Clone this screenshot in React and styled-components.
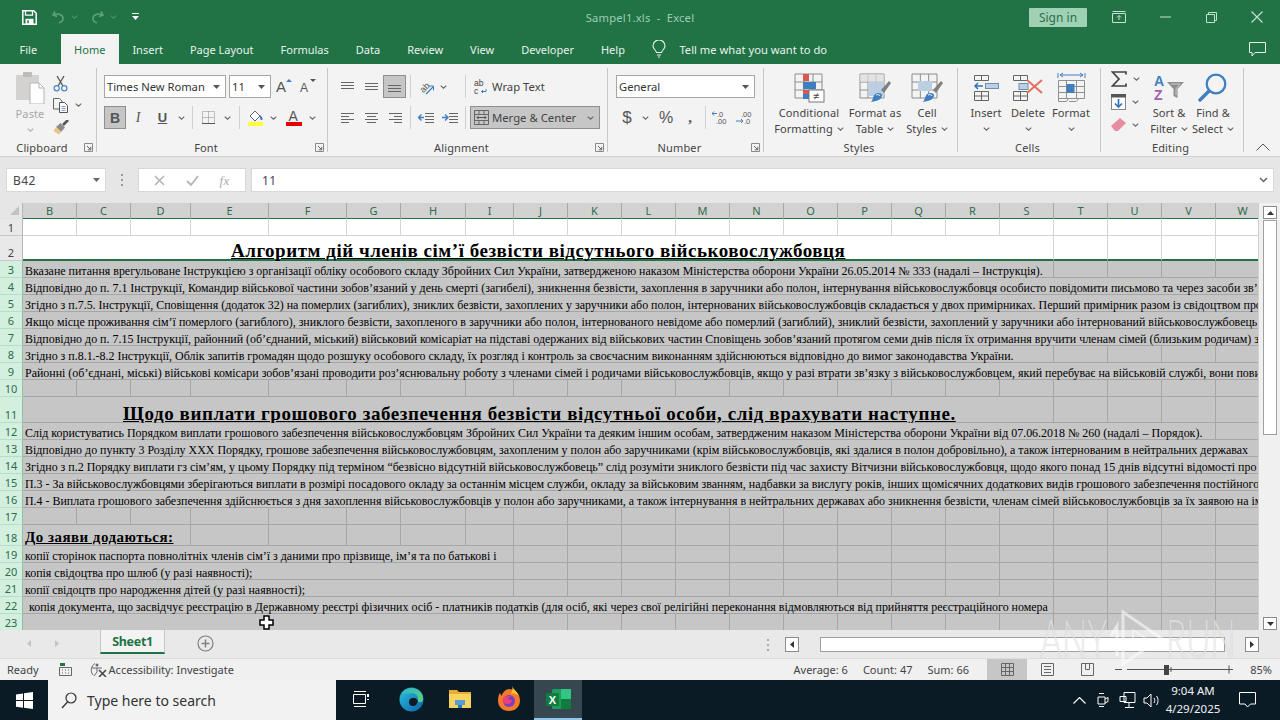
import styled, { createGlobalStyle } from "styled-components";

const UI = `"Noto Sans", "Open Sans", sans-serif`;

const GlobalStyle = createGlobalStyle`
  html, body { margin: 0; padding: 0; background: #fff; }
  body { font-family: ${UI}; font-size: 11px; color: #333; }
  * { box-sizing: border-box; }
`;

const Svg = ({ w, h, children }) => (
  <svg width={w} height={h} viewBox={`0 0 ${w} ${h}`} fill="none" style={{ display: "block", flex: "none" }}>
    {children}
  </svg>
);

const Chev = ({ c = "#666" }) => (
  <Svg w={7} h={4}>
    <path d="M.7.6 3.5 3.2 6.3.6" stroke={c} strokeWidth="1.1" />
  </Svg>
);

const Caret = ({ c = "#555" }) => (
  <Svg w={7} h={4}>
    <path d="M0 0h7L3.5 4z" fill={c} />
  </Svg>
);

const Launcher = () => (
  <Svg w={9} h={9}>
    <path d="M.5 8.5v-8h8v8z" stroke="#8a8a8a" />
    <path d="M3 3l3.5 3.5M6.8 3.8v3h-3" stroke="#666" />
  </Svg>
);

/* ---------- title bar ---------- */
const TitleBar = styled.header`
  height: 34px;
  background: #217346;
  display: grid;
  grid-template-columns: 1fr auto 1fr;
  align-items: center;
`;
const Qat = styled.div`
  display: flex;
  align-items: center;
  padding-left: 22px;
`;
const QatBtn = styled.div`
  display: flex;
  align-items: center;
  gap: 6px;
  margin-left: ${(p) => p.$ml}px;
`;
const DocTitle = styled.div`
  color: #9fcdb3;
  font-size: 11.2px;
  letter-spacing: 0.2px;
  white-space: pre;
`;
const WindowControls = styled.div`
  display: flex;
  align-items: center;
  justify-content: flex-end;
`;
const SignIn = styled.div`
  width: 58px;
  height: 19px;
  margin-right: 9px;
  background: #9fd2b4;
  color: #2e6f4e;
  font-size: 12px;
  border-radius: 1px;
  display: flex;
  align-items: center;
  justify-content: center;
`;
const WinBtn = styled.div`
  width: 46px;
  display: flex;
  justify-content: center;
`;

/* ---------- tabs ---------- */
const TabBar = styled.nav`
  height: 30px;
  background: #217346;
  display: flex;
  align-items: stretch;
  padding-left: 6px;
`;
const Tab = styled.div`
  padding: 0 13.5px;
  margin-right: ${(p) => p.$mr || 0}px;
  display: flex;
  align-items: center;
  color: ${(p) => (p.$active ? "#217346" : "#e8f2ec")};
  background: ${(p) => (p.$active ? "#f3f3f3" : "transparent")};
  font-size: 11px;
  white-space: nowrap;
`;
const TellMe = styled.div`
  display: flex;
  align-items: center;
  gap: 13px;
  margin-left: 14px;
  color: #e8f2ec;
  font-size: 11.2px;
`;
const CommentBtn = styled.div`
  margin-left: auto;
  margin-right: 14px;
  display: flex;
  align-items: center;
`;

/* ---------- ribbon ---------- */
const Ribbon = styled.section`
  height: 93px;
  background: #f3f3f3;
  border-bottom: 1px solid #d2d2d2;
  display: flex;
`;
const Group = styled.div`
  width: ${(p) => p.$w}px;
  height: 92px;
  display: flex;
  flex-direction: column;
  background: linear-gradient(#c8c8c8, #c8c8c8) right 4px / 1px 84px no-repeat;
`;
const GroupBody = styled.div`
  height: 75px;
  padding: ${(p) => p.$top ?? 11}px 0 0 ${(p) => p.$left ?? 7}px;
  display: ${(p) => (p.$row ? "flex" : "block")};
`;
const GroupFoot = styled.div`
  height: 17px;
  display: flex;
  align-items: center;
  padding-right: 4px;
`;
const GroupLabel = styled.div`
  flex: 1;
  text-align: center;
  font-size: 11px;
  letter-spacing: 0.15px;
  color: #444;
`;
const ToolRow = styled.div`
  display: flex;
  align-items: center;
  height: 23px;
  margin-bottom: 8px;
`;
const Tool = styled.div`
  width: ${(p) => p.$w}px;
  height: 23px;
  margin-left: ${(p) => p.$ml || 0}px;
  display: flex;
  align-items: center;
  justify-content: center;
  flex: none;
  background: ${(p) => (p.$on ? "#c6c6c6" : "transparent")};
  border: 1px solid ${(p) => (p.$on ? "#8f8f8f" : "transparent")};
`;
const VSep = styled.div`
  width: 1px;
  height: 23px;
  flex: none;
  background: #d0d0d0;
  margin: 0 ${(p) => p.$r ?? 3}px 0 ${(p) => p.$l ?? 3}px;
`;
const Select = styled.div`
  width: ${(p) => p.$w}px;
  height: 23px;
  margin-left: ${(p) => p.$ml || 0}px;
  background: #fff;
  border: 1px solid #a6a6a6;
  padding: 0 5px 0 2px;
  display: flex;
  align-items: center;
  justify-content: space-between;
  flex: none;
  font-size: 11.2px;
  color: #333;
  white-space: nowrap;
`;
const WideBtn = styled.div`
  width: ${(p) => p.$w}px;
  height: 23px;
  flex: none;
  display: flex;
  align-items: center;
  gap: 3px;
  padding-left: 3px;
  font-size: 11.3px;
  color: #444;
  white-space: nowrap;
  background: ${(p) => (p.$on ? "#c6c6c6" : "transparent")};
  border: 1px solid ${(p) => (p.$on ? "#8f8f8f" : "transparent")};
  & > i { margin-left: auto; margin-right: 5px; display: block; }
`;
const Big = styled.div`
  width: ${(p) => p.$w}px;
  flex: none;
  display: flex;
  flex-direction: column;
  align-items: center;
  font-size: 11px;
  line-height: 16px;
  color: #444;
  letter-spacing: 0.1px;
`;
const BigIcon = styled.div`
  height: 35px;
  display: flex;
  align-items: center;
  justify-content: center;
`;
const BigLine = styled.div`
  display: flex;
  align-items: center;
  gap: 4px;
  height: 16px;
  margin-top: ${(p) => p.$mt || 0}px;
  white-space: nowrap;
  color: ${(p) => (p.$dim ? "#a8a8a8" : "inherit")};
`;
const ClipColumn = styled.div`
  display: flex;
  flex-direction: column;
  width: 46px;
  margin-left: 8px;
`;
const ClipItem = styled.div`
  height: 23.5px;
  display: flex;
  align-items: center;
  gap: 6px;
`;
const MiniStack = styled.div`
  width: 36px;
  flex: none;
  margin-top: -3px;
`;
const MiniItem = styled.div`
  height: 23px;
  display: flex;
  align-items: center;
  gap: 6px;
`;
const CollapseCell = styled.div`
  flex: 1;
  display: flex;
  align-items: flex-end;
  justify-content: center;
  padding: 0 0 5px 1px;
`;
const Glyph = styled.span`
  font-family: ${(p) => p.$font || `"Liberation Sans", sans-serif`};
  font-size: ${(p) => p.$size || 14}px;
  font-weight: ${(p) => (p.$bold ? 700 : 400)};
  font-style: ${(p) => (p.$italic ? "italic" : "normal")};
  text-decoration: ${(p) => (p.$under ? "underline" : "none")};
  color: ${(p) => p.$color || "#555"};
  line-height: 1;
`;

/* ---------- formula bar ---------- */
const FormulaBar = styled.section`
  height: 46px;
  background: #e6e6e6;
  padding: 11px 6px 11px 6px;
  display: flex;
  align-items: stretch;
  color: #444;
`;
const FieldBox = styled.div`
  width: ${(p) => p.$w || "auto"};
  flex: ${(p) => (p.$grow ? 1 : "none")};
  background: #fff;
  border: 1px solid #d8d8d8;
  margin-left: ${(p) => p.$ml || 0}px;
  display: flex;
  align-items: center;
  justify-content: ${(p) => p.$justify || "space-between"};
  padding: 0 5px 0 ${(p) => p.$pl || 6}px;
  font-size: 12px;
  letter-spacing: 0.4px;
`;
const Grip = styled.div`
  width: 32px;
  flex: none;
  display: flex;
  align-items: center;
  justify-content: center;
`;

/* ---------- sheet ---------- */
const SheetArea = styled.section`
  height: 427px;
  display: flex;
  position: relative;
  background: #fff;
`;
const GridArea = styled.div`
  width: 1258px;
  overflow: hidden;
  font-family: "Liberation Serif", "Times New Roman", serif;
  color: #000;
`;
const COLS = "23px 54px 54px 60px 78px 78px 54px 65px 48px repeat(14, 54px)";
const HeadRow = styled.div`
  display: grid;
  grid-template-columns: ${COLS};
  height: 16px;
`;
const Corner = styled.div`
  background: #e6e6e6;
  display: flex;
  justify-content: flex-end;
  align-items: flex-end;
  padding: 0 3px 3px 0;
  border-right: 1px solid #b5b5b5;
  border-bottom: 2px solid #e0e0e0;
`;
const ColHead = styled.div`
  background: #d2d2d2;
  border-right: 1px solid #a8a8a8;
  border-bottom: 2px solid #217346;
  display: flex;
  align-items: center;
  justify-content: center;
  font-family: ${UI};
  font-size: 11px;
  color: #2f6a4c;
`;
const Row = styled.div`
  display: grid;
  grid-template-columns: ${COLS};
  height: ${(p) => p.$h}px;
`;
const RowHead = styled.div`
  background: ${(p) => (p.$sel ? "#d3f0df" : "#e9e9e9")};
  color: ${(p) => (p.$sel ? "#2f6a4c" : "#444")};
  border-right: 1px solid ${(p) => (p.$sel ? "#8fbfa4" : "#b5b5b5")};
  border-bottom: 1px solid ${(p) => (p.$sel ? "#b7dcc7" : "#c8c8c8")};
  font-family: ${UI};
  font-size: 11px;
  line-height: 14px;
  display: flex;
  align-items: flex-end;
  justify-content: center;
`;
const Cell = styled.div`
  grid-column: span ${(p) => p.$span || 1};
  background: ${(p) => (p.$sel ? "#c6c6c6" : "#fff")};
  border-right: 1px solid ${(p) => (p.$sel ? "#a6a6a6" : "#d4d4d4")};
  border-bottom: ${(p) => (p.$edge ? "2px solid #217346" : `1px solid ${p.$sel ? "#a6a6a6" : "#d4d4d4"}`)};
  white-space: pre;
  overflow: visible;
  display: flex;
  align-items: flex-end;
  padding-left: ${(p) => p.$indent ?? 2}px;
  font-size: 11.95px;
  line-height: 12px;
  min-width: 0;
`;
const Heading = styled.span`
  display: block;
  font-weight: 700;
  font-size: ${(p) => p.$size}px;
  line-height: 16px;
  text-decoration: underline;
  letter-spacing: ${(p) => p.$ls}px;
`;
const VScroll = styled.div`
  width: 22px;
  background: #f0f0f0;
  border-left: 1px solid #d0d0d0;
  padding: 3px 3px 0 4px;
  display: flex;
  flex-direction: column;
  height: 427px;
`;
const ScrollBtn = styled.div`
  height: 13px;
  background: #fff;
  border: 1px solid #8c8c8c;
  flex: none;
  display: flex;
  align-items: center;
  justify-content: center;
  margin-top: ${(p) => (p.$end ? "auto" : 0)};
`;
const VThumb = styled.div`
  height: 215px;
  margin-top: 1px;
  background: #fff;
  border: 1px solid #a0a0a0;
  flex: none;
`;
const CellPointer = styled.div`
  position: absolute;
  left: 259px;
  top: 412px;
  pointer-events: none;
`;

/* ---------- sheet tabs ---------- */
const SheetTabs = styled.section`
  height: 28px;
  background: #e9e9e9;
  display: flex;
  align-items: flex-start;
`;
const NavArrows = styled.div`
  width: 100px;
  height: 26px;
  display: flex;
  align-items: center;
  gap: 24px;
  padding-left: 27px;
`;
const SheetTab = styled.div`
  width: 65px;
  height: 24px;
  background: #f3f3f3;
  border-left: 1px solid #c8c8c8;
  border-right: 1px solid #c8c8c8;
  border-bottom: 2px solid #217346;
  color: #217346;
  font-weight: 700;
  font-size: 12.5px;
  letter-spacing: -0.3px;
  display: flex;
  align-items: center;
  justify-content: center;
`;
const AddSheet = styled.div`
  margin-left: 32px;
  margin-top: 5px;
`;
const HScrollWrap = styled.div`
  margin-left: auto;
  margin-right: 21px;
  display: flex;
  align-items: center;
  height: 15px;
  margin-top: 7px;
`;
const HBtn = styled.div`
  width: 14px;
  height: 15px;
  background: #fff;
  border: 1px solid #8c8c8c;
  flex: none;
  display: flex;
  align-items: center;
  justify-content: center;
`;
const HThumb = styled.div`
  width: 405px;
  height: 15px;
  margin: 0 20px 0 21px;
  background: #fff;
  border: 1px solid #a0a0a0;
  flex: none;
`;
const GripH = styled.div`
  display: flex;
  height: 15px;
  align-items: center;
  margin-right: 16px;
`;

/* ---------- status bar ---------- */
const StatusBar = styled.footer`
  height: 22px;
  background: #f0f0f0;
  border-top: 1px solid #dcdcdc;
  display: flex;
  align-items: center;
  font-size: 11px;
  color: #444;
  padding-left: 7px;
`;
const StatusLeft = styled.div`
  display: flex;
  align-items: center;
`;
const StatusIcon = styled.span`
  margin-left: ${(p) => p.$ml}px;
`;
const StatusStats = styled.div`
  margin-left: auto;
  display: flex;
  gap: 15px;
  margin-right: 18px;
`;
const ViewBtn = styled.div`
  width: 40px;
  height: 22px;
  display: flex;
  align-items: center;
  justify-content: center;
  background: ${(p) => (p.$on ? "#c6c6c6" : "transparent")};
`;
const ZoomSlider = styled.div`
  display: flex;
  align-items: center;
  margin-left: 8px;
`;
const ZoomValue = styled.div`
  width: 30px;
  margin-left: 9px;
  margin-right: 8px;
  text-align: right;
  white-space: nowrap;
`;

/* ---------- taskbar ---------- */
const Taskbar = styled.footer`
  height: 40px;
  background: #0b1b25;
  display: flex;
  align-items: stretch;
  color: #fff;
`;
const StartBtn = styled.div`
  width: 48px;
  display: flex;
  align-items: center;
  justify-content: center;
`;
const SearchBox = styled.div`
  width: 288px;
  background: #f2f2f2;
  color: #333;
  display: flex;
  align-items: center;
  gap: 10px;
  padding-left: 13px;
  font-size: 14px;
`;
const TaskIcon = styled.div`
  width: 48px;
  margin-left: ${(p) => p.$ml || 0}px;
  display: flex;
  align-items: center;
  justify-content: center;
  background: ${(p) => (p.$on ? "#37474f" : "transparent")};
  border-bottom: 2px solid ${(p) => (p.$on ? "#8fc6ea" : "transparent")};
`;
const Tray = styled.div`
  margin-left: auto;
  padding-right: 9px;
  display: flex;
  align-items: center;
`;
const TrayIcon = styled.div`
  width: 24px;
  display: flex;
  justify-content: center;
`;
const Clock = styled.div`
  width: 60px;
  text-align: center;
  font-size: 11.5px;
  line-height: 18px;
  white-space: nowrap;
  color: #eef2f4;
`;
const NotifyBtn = styled.div`
  width: 48px;
  display: flex;
  justify-content: center;
`;

/* ---------- watermark ---------- */
const Root = styled.div`
  width: 1280px;
  height: 720px;
  overflow: hidden;
  position: relative;
  display: flex;
  flex-direction: column;
`;
const Watermark = styled.div`
  position: absolute;
  left: 1040px;
  top: 610px;
  width: 196px;
  height: 56px;
  display: flex;
  align-items: center;
  color: rgba(255, 255, 255, 0.55);
  font-family: "Lato", sans-serif;
  font-weight: 300;
  font-size: 54px;
  line-height: 56px;
  text-shadow: 0 0 1px rgba(130, 130, 130, 0.35);
  pointer-events: none;
`;
const MarkWord = styled.span`
  display: block;
  flex: none;
  transform: scaleX(0.62);
  transform-origin: left center;
  width: ${(p) => p.$w}px;
  white-space: nowrap;
`;

/* ---------- data ---------- */
const COLUMN_NAMES = "BCDEFGHIJKLMNOPQRSTUVW".split("");

const ROWS = [
  { n: 1, h: 17 },
  { n: 2, h: 25, span: 18, edge: true, head: "Алгоритм дій членів сім’ї безвісти відсутнього військовослужбовця", indent: 208, size: 19, ls: 0.52 },
  { n: 3, h: 17, span: 18, text: "Вказане питання врегульоване Інструкцією з організації обліку особового складу Збройних Сил України, затвердженою наказом Міністерства оборони України 26.05.2014 № 333 (надалі – Інструкція)." },
  { n: 4, h: 17, span: 22, text: "Відповідно до п. 7.1 Інструкції, Командир військової частини зобов’язаний у день смерті (загибелі), зникнення безвісти, захоплення в заручники або полон, інтернування військовослужбовця особисто повідомити письмово та через засоби зв’язку" },
  { n: 5, h: 17, span: 22, text: "Згідно з п.7.5. Інструкції, Сповіщення (додаток 32) на померлих (загиблих), зниклих безвісти, захоплених у заручники або полон, інтернованих військовослужбовців складається у двох примірниках. Перший примірник разом із свідоцтвом про смерть" },
  { n: 6, h: 17, span: 22, text: "Якщо місце проживання сім’ї померлого (загиблого), зниклого безвісти, захопленого в заручники або полон, інтернованого невідоме або померлий (загиблий), зниклий безвісти, захоплений у заручники або інтернований військовослужбовець не" },
  { n: 7, h: 17, span: 22, text: "Відповідно до п. 7.15 Інструкції, районний (об’єднаний, міський) військовий комісаріат на підставі одержаних від військових частин Сповіщень зобов’язаний протягом семи днів після їх отримання вручити членам сімей (близьким родичам) загиблих" },
  { n: 8, h: 17, span: 18, text: "Згідно з п.8.1.-8.2 Інструкції, Облік запитів громадян щодо розшуку особового складу, їх розгляд і контроль за своєчасним виконанням здійснюються відповідно до вимог законодавства України." },
  { n: 9, h: 17, span: 22, text: "Районні (об’єднані, міські) військові комісари зобов’язані проводити роз’яснювальну роботу з членами сімей і родичами військовослужбовців, якщо у разі втрати зв’язку з військовослужбовцем, який перебуває на військовій службі, вони повинні" },
  { n: 10, h: 17 },
  { n: 11, h: 26, span: 18, head: "Щодо виплати грошового забезпечення безвісти відсутньої особи, слід врахувати наступне.", indent: 100, size: 19, ls: 0.58 },
  { n: 12, h: 17, span: 21, text: "Слід користуватись Порядком виплати грошового забезпечення військовослужбовцям Збройних Сил України та деяким іншим особам, затвердженим наказом Міністерства оборони України від 07.06.2018 № 260 (надалі – Порядок)." },
  { n: 13, h: 17, span: 22, text: "Відповідно до пункту 3 Розділу XXX Порядку, грошове забезпечення військовослужбовцям, захопленим у полон або заручниками (крім військовослужбовців, які здалися в полон добровільно), а також інтернованим в нейтральних державах" },
  { n: 14, h: 17, span: 22, text: "Згідно з п.2 Порядку виплати гз сім’ям, у цьому Порядку під терміном “безвісно відсутній військовослужбовець” слід розуміти зниклого безвісти під час захисту Вітчизни військовослужбовця, щодо якого понад 15 днів відсутні відомості про" },
  { n: 15, h: 17, span: 22, text: "П.3 - За військовослужбовцями зберігаються виплати в розмірі посадового окладу за останнім місцем служби, окладу за військовим званням, надбавки за вислугу років, інших щомісячних додаткових видів грошового забезпечення постійного" },
  { n: 16, h: 17, span: 22, text: "П.4 - Виплата грошового забезпечення здійснюється з дня захоплення військовослужбовців у полон або заручниками, а також інтернування в нейтральних державах або зникнення безвісти, членам сімей військовослужбовців за їх заявою на ім’я" },
  { n: 17, h: 17 },
  { n: 18, h: 21, span: 3, head: "До заяви додаються:", indent: 2, size: 15, ls: 0.46 },
  { n: 19, h: 17, span: 8, text: "копії сторінок паспорта повнолітніх членів сім’ї з даними про прізвище, ім’я та по батькові і" },
  { n: 20, h: 17, span: 8, text: "копія свідоцтва про шлюб (у разі наявності);" },
  { n: 21, h: 17, span: 8, text: "копії свідоцтв про народження дітей (у разі наявності);" },
  { n: 22, h: 17, span: 18, indent: 6, text: "копія документа, що засвідчує реєстрацію в Державному реєстрі фізичних осіб - платників податків (для осіб, які через свої релігійні переконання відмовляються від прийняття реєстраційного номера" },
  { n: 23, h: 17, span: 8 },
];

const SheetRow = ({ row }) => {
  const { n, h, span = 1, text, head, indent, size, ls, edge } = row;
  const sel = n >= 3;
  const blanks = COLUMN_NAMES.length - span;
  return (
    <Row $h={h}>
      <RowHead $sel={sel}>{n}</RowHead>
      <Cell $span={span} $sel={sel} $edge={edge} $indent={indent}>
        {head ? <Heading $size={size} $ls={ls}>{head}</Heading> : text}
      </Cell>
      {Array.from({ length: blanks }, (_, i) => (
        <Cell key={i} $sel={sel} $edge={edge} />
      ))}
    </Row>
  );
};

/* ---------- ribbon icons ---------- */
const SaveIcon = () => (
  <Svg w={15} h={15}>
    <path d="M.8.8h11l2.4 2.4v11H.8z" stroke="#fff" strokeWidth="1.5" />
    <path d="M3.5 1v4.2h7V1" stroke="#fff" strokeWidth="1.3" />
    <path d="M3.5 14V8.8h8V14" fill="#fff" />
    <path d="M6 10.3v3" stroke="#217346" strokeWidth="1.5" />
  </Svg>
);
const UndoIcon = ({ flip }) => (
  <svg width="13" height="14" viewBox="0 0 13 14" fill="none" style={{ transform: flip ? "scaleX(-1)" : "none", display: "block" }}>
    <path d="M3 1.5 1 5l4 1.5M1.5 5C6 2.8 11 4.5 11 8.5c0 2.2-1.8 3.8-4 4.2" stroke="#5f9f7d" strokeWidth="1.6" />
  </svg>
);
const QatMore = () => (
  <Svg w={7} h={8}>
    <path d="M0 .5h7" stroke="#fff" />
    <path d="M0 3h7L3.5 7z" fill="#fff" />
  </Svg>
);
const PasteIcon = () => (
  <Svg w={30} h={32}>
    <rect x="1" y="3" width="23" height="25" fill="#d4d2d0" />
    <rect x="8" y="0" width="9" height="5" rx="1" fill="#bdbbb9" />
    <path d="M15 11h9l5 5v16H15z" fill="#fff" stroke="#b5b5b5" />
    <path d="M24 11v5h5" stroke="#b5b5b5" />
  </Svg>
);
const CutIcon = () => (
  <Svg w={15} h={17}>
    <path d="M4 1l6 10M11 1 5 11" stroke="#555" strokeWidth="1.3" />
    <circle cx="3.7" cy="13.2" r="2.6" stroke="#4a86c5" strokeWidth="1.2" />
    <circle cx="11.3" cy="13.2" r="2.6" stroke="#4a86c5" strokeWidth="1.2" />
  </Svg>
);
const CopyIcon = () => (
  <Svg w={16} h={15}>
    <path d="M.5.5h6l2.5 2.5v8H.5z" fill="#f3f3f3" stroke="#666" />
    <path d="M6.5 4.5h5l3 3v7h-8z" fill="#fff" stroke="#555" />
    <path d="M8.5 8.5h4M8.5 10.5h4M8.5 12.5h4" stroke="#7a9cc0" />
  </Svg>
);
const BrushIcon = () => (
  <Svg w={16} h={15}>
    <path d="M10 5 15 0" stroke="#555" strokeWidth="2.6" />
    <path d="M7.5 3 12 7.5 8 12 3 7z" fill="#8b8b8b" />
    <path d="M3 7l5 5-2 2.5-5.5-3.5z" fill="#e9c77a" />
  </Svg>
);
const GrowFont = ({ up }) => (
  <Svg w={18} h={19}>
    <text x="0" y="15" fontFamily="Liberation Sans" fontSize={up ? 15 : 12} fill="#555">A</text>
    <path d={up ? "M10 5h6L13 2z" : "M10 2h6L13 5z"} fill={up ? "#3f7fbf" : "#555"} />
  </Svg>
);
const BordersIcon = () => (
  <Svg w={13} h={13}>
    <path d="M.5.5h12v12H.5zM6.5.5v12M.5 6.5h12" stroke="#888" strokeDasharray="1 1" />
    <path d="M0 12.5h13" stroke="#555" />
  </Svg>
);
const FillIcon = () => (
  <Svg w={17} h={17}>
    <path d="M3 7 8 2l5 5-5 5z" fill="#fff" stroke="#666" />
    <path d="M13 6c2 2 3 3 2.5 4.5S13 11 13 9z" fill="#3f7fbf" />
    <rect x="1" y="13" width="15" height="4" fill="#ffff33" />
  </Svg>
);
const ColorAIcon = () => (
  <Svg w={16} h={17}>
    <text x="2.4" y="12" fontFamily="Liberation Sans" fontSize="14" fill="#555">A</text>
    <rect x="0" y="13" width="16" height="4" fill="#e00000" />
  </Svg>
);
const Lines = ({ rows }) => (
  <Svg w={15} h={13}>
    {rows.map(([a, b, y]) => (
      <path key={y} d={`M${a} ${y}.5H${b}`} stroke="#666" />
    ))}
  </Svg>
);
const L = (a1, b1, a2, b2) => [[a1, b1, 2], [a2, b2, 5], [a1, b1, 8], [a2, b2, 11]];
const VAlign = ({ y }) => (
  <Svg w={15} h={13}>
    <path d={`M1 ${y}.5h13M1 ${y + 3}.5h13M1 ${y + 6}.5h13`} stroke="#666" />
  </Svg>
);
const OrientIcon = () => (
  <Svg w={17} h={16}>
    <text x="1" y="12" fontFamily="Liberation Sans" fontSize="9" fill="#555" transform="rotate(-45 6 8)">ab</text>
    <path d="M8 15 15 8" stroke="#3f7fbf" strokeWidth="1.2" />
    <path d="M11 7h4.5v4.5" stroke="#3f7fbf" />
  </Svg>
);
const IndentIcon = ({ out }) => (
  <Svg w={16} h={13}>
    <path d="M7 2.5h9M7 5.5h9M7 8.5h9M7 11.5h9" stroke="#666" />
    <path d={out ? "M6 6.5H1M3.5 3.5l-3 3 3 3" : "M0 6.5h5M3 3.5l3 3-3 3"} stroke="#3f7fbf" strokeWidth="1.4" />
  </Svg>
);
const WrapIcon = () => (
  <Svg w={15} h={18}>
    <text x="0" y="8" fontFamily="Liberation Sans" fontSize="8.5" fill="#444">ab</text>
    <text x="0" y="16" fontFamily="Liberation Sans" fontSize="8.5" fill="#444">c</text>
    <path d="M12 11v2.500H7.500M9 12l-1.500 1.500L9 15" stroke="#3f7fbf" />
  </Svg>
);
const MergeIcon = () => (
  <Svg w={15} h={15}>
    <path d="M.5.5h14v14H.5zM.5 4.5h14M.5 10.5h14M5 .5v4M10 .5v4M5 10.5v4M10 10.5v4" stroke="#666" />
    <path d="M3 7.5h9M4.5 6 3 7.5 4.5 9M10.5 6 12 7.5 10.5 9" stroke="#555" />
  </Svg>
);
const DecIcon = ({ more }) => (
  <Svg w={18} h={17}>
    <text x={more ? 5 : 5} y="7.500" fontFamily="Liberation Sans" fontSize="7.5" fill="#555">{more ? ".00" : ".0"}</text>
    <text x={more ? 8 : 4} y="14.500" fontFamily="Liberation Sans" fontSize="7.5" fill="#555">{more ? ".0" : ".00"}</text>
    <path d={more ? "M0 12h7M5 10l2 2-2 2" : "M0 4.500h5M2 2.500l-2 2 2 2"} stroke="#3f7fbf" />
  </Svg>
);
const GridBase = ({ x = 1, y = 1, w = 27, h = 24, c = "#8c8c8c" }) => {
  const lines = [];
  for (let i = 0; i <= 3; i++) lines.push(`M${x + (w * i) / 3} ${y}v${h}`);
  for (let i = 0; i <= 3; i++) lines.push(`M${x} ${y + (h * i) / 3}h${w}`);
  return <path d={lines.join("")} stroke={c} />;
};
const CondIcon = () => (
  <Svg w={31} h={30}>
    <GridBase />
    <rect x="9" y="1" width="6" height="7" fill="#d9584f" />
    <rect x="9" y="9" width="13" height="7" fill="#3f7fbf" />
    <rect x="9" y="17" width="10" height="4" fill="#d9584f" />
    <rect x="9" y="21" width="6" height="5" fill="#3f7fbf" />
    <rect x="15" y="17" width="15" height="12" fill="#fff" stroke="#777" />
    <text x="19" y="27" fontFamily="Liberation Sans" fontSize="11" fill="#444">≠</text>
  </Svg>
);
const BrushOver = () => (
  <>
    <path d="M22 17 30 8l2 2-7 10z" fill="#7f7f7f" />
    <path d="M16 21c3-2 7-1 7 1 0 4-4 6-11 7 2-2 2-6 4-8z" fill="#3f7fbf" />
    <path d="M17 22c2-1 4 0 4 1" stroke="#fff" />
  </>
);
const TableStyleIcon = () => (
  <Svg w={33} h={30}>
    <GridBase w={24} />
    <rect x="9" y="9" width="16" height="14" fill="#bccfe2" />
    <rect x="1" y="1" width="24" height="8" fill="#dcdcdc" opacity=".7" />
    <BrushOver />
  </Svg>
);
const CellStyleIcon = () => (
  <Svg w={33} h={30}>
    <GridBase w={25} />
    <rect x="7" y="8" width="14" height="10" fill="#bccfe2" />
    <BrushOver />
  </Svg>
);
const InsertCellsIcon = () => (
  <Svg w={27} h={28}>
    <path d="M1.5 1.5h14v5h-14zM8.5 1.5v5M1.5 17.5h14v9h-14zM8.5 17.5v9M1.5 22h14" stroke="#666" />
    <rect x="12.5" y="9.5" width="13" height="5" fill="#bcd0e4" stroke="#6f8fae" />
    <path d="M10 12H2M5 9 2 12l3 3" stroke="#2f75b5" strokeWidth="1.5" />
  </Svg>
);
const DeleteCellsIcon = () => (
  <Svg w={32} h={28}>
    <path d="M1.5 1.5h14v5h-14zM8.5 1.5v5M1.5 17.5h14v9h-14zM8.5 17.5v9M1.5 22h14" stroke="#666" />
    <rect x="7" y="9.5" width="9" height="6" fill="#bcd0e4" stroke="#6f8fae" />
    <path d="M15 6l15 13M30 6 15 19" stroke="#e2705f" strokeWidth="2" />
  </Svg>
);
const FormatCellsIcon = () => (
  <Svg w={29} h={31}>
    <path d="M1 1v5M28 1v5M3 3h23M6 1 3 3l3 2M23 1l3 2-3 2" stroke="#3f7fbf" />
    <path d="M1.5 8.5h26v18h-26zM9.5 8.5v18M19.5 8.5v18M1.5 14.5h26M1.5 20.5h26" stroke="#909090" />
    <path d="M1.5 26.5v3h8l2-3M12 29.5h7l3-3" stroke="#909090" />
    <rect x="9.5" y="12" width="8" height="9" fill="#3f7fbf" />
  </Svg>
);
const SumIcon = () => (
  <Svg w={16} h={16}>
    <path d="M15 3.5V1H1.5L8 8 1.5 15H15v-2.5" stroke="#444" strokeWidth="1.7" />
  </Svg>
);
const FillDownIcon = () => (
  <Svg w={15} h={16}>
    <rect x=".5" y=".5" width="14" height="15" fill="#fff" stroke="#888" />
    <rect x="0" y="0" width="15" height="3.5" fill="#555" />
    <path d="M7.5 5v8M4 9.5l3.5 3.5L11 9.5" stroke="#2f75b5" strokeWidth="1.7" />
  </Svg>
);
const EraserIcon = () => (
  <Svg w={15} h={13}>
    <path d="M0 8 9 0l6 5-8 8H4z" fill="#e88ca0" />
  </Svg>
);
const SortIcon = () => (
  <Svg w={31} h={30}>
    <text x="0" y="13" fontFamily="Liberation Sans" fontWeight="700" fontSize="14" fill="#3f7fbf">A</text>
    <text x="0" y="27" fontFamily="Liberation Sans" fontWeight="700" fontSize="14" fill="#a65db0">Z</text>
    <path d="M13 9h17l-6.5 7v9l-4-2v-7z" fill="#8f8f8f" />
    <path d="M17 11h9l-4 5v6" stroke="#c9c9c9" />
  </Svg>
);
const FindIcon = () => (
  <Svg w={30} h={30}>
    <circle cx="18" cy="11" r="9.3" stroke="#3f7fbf" strokeWidth="2.3" />
    <path d="M11 18 2 27" stroke="#3f7fbf" strokeWidth="3.4" strokeLinecap="round" />
  </Svg>
);

/* ---------- taskbar and misc icons ---------- */
const WinLogo = () => (
  <Svg w={17} h={17}>
    <path d="M0 2.4 7 1.4v6.7H0zM8 1.3 17 0v8.1H8zM0 9h7v6.7L0 14.7zM8 9h9v8l-9-1.3z" fill="#fff" />
  </Svg>
);
const EdgeIcon = () => (
  <svg width="25" height="25" viewBox="0 0 25 25" style={{ display: "block" }}>
    <defs>
      <linearGradient id="edgeA" x1="0" y1="0" x2="1" y2="1">
        <stop offset="0" stopColor="#2bc3d8" />
        <stop offset="1" stopColor="#0b5fae" />
      </linearGradient>
      <linearGradient id="edgeB" x1="0" y1="0" x2="1" y2="1">
        <stop offset="0" stopColor="#2fb6c9" />
        <stop offset="1" stopColor="#5ed27d" />
      </linearGradient>
    </defs>
    <circle cx="12.5" cy="12.5" r="12" fill="url(#edgeA)" />
    <path d="M3 7c3-7 15-8 20 0 2 4 1 9-2 8-3 0-2-1-2-3 0-4-3-6-7-6-3 0-6 1-9 1z" fill="url(#edgeB)" />
    <circle cx="14" cy="15" r="4" fill="#0b1b25" />
    <path d="M14 11c3 0 5 2 5 4l-6 3z" fill="#0b1b25" />
  </svg>
);
const FolderIcon = () => (
  <Svg w={22} h={20}>
    <path d="M0 1h8l2 2h12v3H0z" fill="#e3ae33" />
    <rect x="0" y="5" width="22" height="14" fill="#f6d45f" />
    <rect x="6" y="11" width="10" height="5" fill="#5a9bd5" />
    <rect x="9" y="16" width="4" height="3" fill="#2f75b5" />
  </Svg>
);
const FoxIcon = () => (
  <Svg w={24} h={26}>
    <path d="M12 3c6 0 11 5 11 11.500S18 25 12 25 1 21 1 14.500C1 11 2 8 3 7l1.500 3C6 6 9 3 12 3z" fill="#f47a2a" />
    <path d="M15 0c1 3 5 5 7 10-2-2-5-3-8-2 1-3 2-5 1-8z" fill="#fdc02f" />
    <circle cx="12" cy="15" r="6" fill="#7a3fc0" />
    <path d="M6 12c2-2 5-3 8-1-2 0-3 1-3 2l4 1c0 3-3 5-6 4s-4-3-3-6z" fill="#e8427a" />
  </Svg>
);
const XlIcon = () => (
  <Svg w={25} h={22}>
    <rect x="6" y="1" width="19" height="20" rx="1" fill="#1e9e5c" />
    <rect x="15" y="1" width="10" height="10" fill="#33c481" />
    <rect x="15" y="11" width="10" height="10" fill="#107c41" />
    <rect x="0" y="5" width="13" height="13" rx="1" fill="#107c41" />
    <text x="2.800" y="15.500" fontFamily="Liberation Sans" fontWeight="700" fontSize="11" fill="#fff">X</text>
  </Svg>
);

const Watermarked = () => (
  <Watermark>
    <MarkWord $w={69}>ANY</MarkWord>
    <Svg w={57} h={56}>
      <path d="M2 26 8 16v30M14 2v52l38-26z" stroke="rgba(255,255,255,.55)" strokeWidth="3" />
      <path d="M24 20v16l12-8z" stroke="rgba(255,255,255,.4)" strokeWidth="2" />
    </Svg>
    <MarkWord $w={68}>RUN</MarkWord>
  </Watermark>
);

export default function App() {
  return (
    <Root>
      <GlobalStyle />
      <TitleBar>
        <Qat>
          <SaveIcon />
          <QatBtn $ml={15}><UndoIcon /><Chev c="#4d8f6d" /></QatBtn>
          <QatBtn $ml={13}><UndoIcon flip /><Chev c="#4d8f6d" /></QatBtn>
          <QatBtn $ml={15}><QatMore /></QatBtn>
        </Qat>
        <DocTitle>Sampel1.xls  -  Excel</DocTitle>
        <WindowControls>
          <SignIn>Sign in</SignIn>
          <WinBtn>
            <Svg w={14} h={12}>
              <path d="M.5 2.500h13v9H.5zM.5.500h13M7 9V4.500M5 6.500l2-2 2 2" stroke="#c7e0d2" />
            </Svg>
          </WinBtn>
          <WinBtn><Svg w={11} h={2}><path d="M0 1h11" stroke="#c7e0d2" /></Svg></WinBtn>
          <WinBtn>
            <Svg w={11} h={11}>
              <path d="M.5 2.500h8v8h-8zM2.500 2.500v-2h8v8h-2" stroke="#c7e0d2" />
            </Svg>
          </WinBtn>
          <WinBtn><Svg w={12} h={12}><path d="m.5.5 11 11m0-11-11 11" stroke="#c7e0d2" strokeWidth="1.200" /></Svg></WinBtn>
        </WindowControls>
      </TitleBar>

      <TabBar>
        <Tab $mr={10}>File</Tab>
        <Tab $active>Home</Tab>
        <Tab>Insert</Tab>
        <Tab>Page Layout</Tab>
        <Tab>Formulas</Tab>
        <Tab>Data</Tab>
        <Tab>Review</Tab>
        <Tab>View</Tab>
        <Tab>Developer</Tab>
        <Tab>Help</Tab>
        <TellMe>
          <Svg w={14} h={18}>
            <path d="M4.500 12.500C4 10 1 9 1 6a6 6 0 0 1 12 0c0 3-3 4-3.500 6.500zM5 15h4M6 17h2" stroke="#e8f2ec" strokeWidth="1.100" />
          </Svg>
          Tell me what you want to do
        </TellMe>
        <CommentBtn>
          <Svg w={17} h={15}>
            <path d="M.5.5h16v10H6l-3 3.500v-3.500H.5z" stroke="#e8f2ec" />
          </Svg>
        </CommentBtn>
      </TabBar>

      <Ribbon>
        <Group $w={97}>
          <GroupBody $row $top={8} $left={15}>
            <Big $w={30}>
              <PasteIcon />
              <BigLine $dim $mt={2}>Paste</BigLine>
              <BigLine><Chev c="#b0b0b0" /></BigLine>
            </Big>
            <ClipColumn>
              <ClipItem><CutIcon /></ClipItem>
              <ClipItem><CopyIcon /><Chev /></ClipItem>
              <ClipItem><BrushIcon /></ClipItem>
            </ClipColumn>
          </GroupBody>
          <GroupFoot>
            <GroupLabel>Clipboard</GroupLabel>
            <Launcher />
          </GroupFoot>
        </Group>

        <Group $w={231}>
          <GroupBody>
            <ToolRow>
              <Select $w={122}><span>Times New Roman</span><Caret /></Select>
              <Select $w={42} $ml={3}><span>11</span><Caret /></Select>
              <Tool $w={24} $ml={2}><GrowFont up /></Tool>
              <Tool $w={24}><GrowFont /></Tool>
            </ToolRow>
            <ToolRow>
              <Tool $w={22} $on><Glyph $bold $size={14}>B</Glyph></Tool>
              <Tool $w={24}><Glyph $italic $size={14} $font={`"Liberation Serif", serif`}>I</Glyph></Tool>
              <Tool $w={25}><Glyph $under $bold $size={13}>U</Glyph></Tool>
              <Tool $w={12}><Chev /></Tool>
              <VSep $l={5} $r={5} />
              <Tool $w={20}><BordersIcon /></Tool>
              <Tool $w={18}><Chev /></Tool>
              <VSep />
              <Tool $w={24}><FillIcon /></Tool>
              <Tool $w={12}><Chev /></Tool>
              <Tool $w={29}><ColorAIcon /></Tool>
              <Tool $w={8}><Chev /></Tool>
            </ToolRow>
          </GroupBody>
          <GroupFoot>
            <GroupLabel>Font</GroupLabel>
            <Launcher />
          </GroupFoot>
        </Group>

        <Group $w={280}>
          <GroupBody>
            <ToolRow>
              <Tool $w={24}><VAlign y={2} /></Tool>
              <Tool $w={24}><VAlign y={3} /></Tool>
              <Tool $w={23} $on><VAlign y={5} /></Tool>
              <VSep $l={4} $r={3} />
              <Tool $w={24}><OrientIcon /></Tool>
              <Tool $w={10}><Chev /></Tool>
              <VSep $l={17} $r={4} />
              <WideBtn $w={90}><WrapIcon /><span>Wrap Text</span></WideBtn>
            </ToolRow>
            <ToolRow>
              <Tool $w={24}><Lines rows={L(1, 14, 1, 9)} /></Tool>
              <Tool $w={24}><Lines rows={L(1, 14, 3, 12)} /></Tool>
              <Tool $w={24}><Lines rows={L(1, 14, 6, 14)} /></Tool>
              <VSep />
              <Tool $w={24}><IndentIcon out /></Tool>
              <Tool $w={24}><IndentIcon /></Tool>
              <VSep $l={3} $r={4} />
              <WideBtn $w={130} $on><MergeIcon /><span>Merge &amp; Center</span><i><Chev /></i></WideBtn>
            </ToolRow>
          </GroupBody>
          <GroupFoot>
            <GroupLabel>Alignment</GroupLabel>
            <Launcher />
          </GroupFoot>
        </Group>

        <Group $w={156}>
          <GroupBody $left={8}>
            <ToolRow>
              <Select $w={139}><span>General</span><Caret /></Select>
            </ToolRow>
            <ToolRow>
              <Tool $w={22}><Glyph $size={17}>$</Glyph></Tool>
              <Tool $w={14}><Chev /></Tool>
              <Tool $w={24} $ml={2}><Glyph $size={16}>%</Glyph></Tool>
              <Tool $w={24}><Glyph $bold $size={15} $font={`"Liberation Serif", serif`}>,</Glyph></Tool>
              <VSep />
              <Tool $w={24}><DecIcon /></Tool>
              <Tool $w={24}><DecIcon more /></Tool>
            </ToolRow>
          </GroupBody>
          <GroupFoot>
            <GroupLabel>Number</GroupLabel>
            <Launcher />
          </GroupFoot>
        </Group>

        <Group $w={194}>
          <GroupBody $row $top={6} $left={6}>
            <Big $w={78}>
              <BigIcon><CondIcon /></BigIcon>
              <BigLine>Conditional</BigLine>
              <BigLine>Formatting <Chev /></BigLine>
            </Big>
            <Big $w={54}>
              <BigIcon><TableStyleIcon /></BigIcon>
              <BigLine>Format as</BigLine>
              <BigLine>Table <Chev /></BigLine>
            </Big>
            <Big $w={50}>
              <BigIcon><CellStyleIcon /></BigIcon>
              <BigLine>Cell</BigLine>
              <BigLine>Styles <Chev /></BigLine>
            </Big>
          </GroupBody>
          <GroupFoot>
            <GroupLabel>Styles</GroupLabel>
          </GroupFoot>
        </Group>

        <Group $w={143}>
          <GroupBody $row $top={6} $left={7}>
            <Big $w={42}>
              <BigIcon><InsertCellsIcon /></BigIcon>
              <BigLine>Insert</BigLine>
              <BigLine><Chev /></BigLine>
            </Big>
            <Big $w={42}>
              <BigIcon><DeleteCellsIcon /></BigIcon>
              <BigLine>Delete</BigLine>
              <BigLine><Chev /></BigLine>
            </Big>
            <Big $w={44}>
              <BigIcon><FormatCellsIcon /></BigIcon>
              <BigLine>Format</BigLine>
              <BigLine><Chev /></BigLine>
            </Big>
          </GroupBody>
          <GroupFoot>
            <GroupLabel>Cells</GroupLabel>
          </GroupFoot>
        </Group>

        <Group $w={143}>
          <GroupBody $row $top={6} $left={10}>
            <MiniStack>
              <MiniItem><SumIcon /><Chev /></MiniItem>
              <MiniItem><FillDownIcon /><Chev /></MiniItem>
              <MiniItem><EraserIcon /><Chev /></MiniItem>
            </MiniStack>
            <Big $w={44}>
              <BigIcon><SortIcon /></BigIcon>
              <BigLine>Sort &amp;</BigLine>
              <BigLine>Filter <Chev /></BigLine>
            </Big>
            <Big $w={44}>
              <BigIcon><FindIcon /></BigIcon>
              <BigLine>Find &amp;</BigLine>
              <BigLine>Select <Chev /></BigLine>
            </Big>
          </GroupBody>
          <GroupFoot>
            <GroupLabel>Editing</GroupLabel>
          </GroupFoot>
        </Group>

        <CollapseCell>
          <Svg w={14} h={8}><path d="M.5 7.500 7 1l6.500 6.500" stroke="#555" /></Svg>
        </CollapseCell>
      </Ribbon>

      <FormulaBar>
        <FieldBox $w="100px"><span>B42</span><Caret c="#666" /></FieldBox>
        <Grip>
          <Svg w={2} h={12}><path d="M1 0v2M1 5v2M1 10v2" stroke="#999" strokeWidth="2" /></Svg>
        </Grip>
        <FieldBox $w="108px" $justify="space-around" $pl={5}>
          <Svg w={11} h={11}><path d="m1 1 9 9m0-9-9 9" stroke="#b5b5b5" strokeWidth="1.600" /></Svg>
          <Svg w={13} h={11}><path d="m1 6 4 4 7-9" stroke="#b5b5b5" strokeWidth="1.800" /></Svg>
          <Glyph $italic $size={13} $color="#aaa" $font={`"Liberation Serif", serif`}>fx</Glyph>
        </FieldBox>
        <FieldBox $grow $ml={5} $pl={10}>
          <span>11</span>
          <Svg w={9} h={6}><path d="m1 1 3.500 3.500L8 1" stroke="#666" strokeWidth="1.500" /></Svg>
        </FieldBox>
      </FormulaBar>

      <SheetArea>
        <GridArea>
          <HeadRow>
            <Corner><Svg w={9} h={9}><path d="M9 0v9H0z" fill="#c2c2c2" /></Svg></Corner>
            {COLUMN_NAMES.map((c) => <ColHead key={c}>{c}</ColHead>)}
          </HeadRow>
          {ROWS.map((r) => <SheetRow key={r.n} row={r} />)}
        </GridArea>
        <VScroll>
          <ScrollBtn><Svg w={7} h={4}><path d="M0 4h7L3.500 0z" fill="#333" /></Svg></ScrollBtn>
          <VThumb />
          <ScrollBtn $end><Svg w={7} h={4}><path d="M0 0h7L3.500 4z" fill="#333" /></Svg></ScrollBtn>
        </VScroll>
        <CellPointer>
          <Svg w={15} h={15}>
            <path d="M5 1h5v4h4v5h-4v4H5v-4H1V5h4z" fill="#fff" stroke="#000" strokeWidth="1.500" />
          </Svg>
        </CellPointer>
      </SheetArea>

      <SheetTabs>
        <NavArrows>
          <Svg w={4} h={7}><path d="M4 0v7L0 3.500z" fill="#c4c4c4" /></Svg>
          <Svg w={4} h={7}><path d="M0 0v7l4-3.500z" fill="#c4c4c4" /></Svg>
        </NavArrows>
        <SheetTab>Sheet1</SheetTab>
        <AddSheet>
          <Svg w={17} h={17}>
            <circle cx="8.500" cy="8.500" r="7.500" stroke="#7f7f7f" strokeWidth="1.200" />
            <path d="M8.500 4.500v8M4.500 8.500h8" stroke="#7f7f7f" strokeWidth="1.500" />
          </Svg>
        </AddSheet>
        <HScrollWrap>
          <GripH>
            <Svg w={2} h={12}><path d="M1 0v2M1 5v2M1 10v2" stroke="#aaa" strokeWidth="2" /></Svg>
          </GripH>
          <HBtn><Svg w={4} h={7}><path d="M4 0v7L0 3.500z" fill="#333" /></Svg></HBtn>
          <HThumb />
          <HBtn><Svg w={4} h={7}><path d="M0 0v7l4-3.500z" fill="#333" /></Svg></HBtn>
        </HScrollWrap>
      </SheetTabs>

      <StatusBar>
        <StatusLeft>
          <span>Ready</span>
          <StatusIcon $ml={20}>
            <Svg w={13} h={13}>
              <path d="M.5 4.500h12v8H.5zM3 7h1M6 7h1M9 7h1M3 10h1M6 10h1M9 10h1" stroke="#666" />
              <path d="M1 0h5v3H1z" fill="#217346" />
            </Svg>
          </StatusIcon>
          <StatusIcon $ml={18}>
            <Svg w={17} h={14}>
              <circle cx="7" cy="2" r="1.500" fill="#666" />
              <path d="M5 .5C1 3 0 8 3 12M2 5h10M7 5v4l-3 4" stroke="#666" />
              <path d="m9 7 7 7m0-7-7 7" stroke="#444" strokeWidth="1.500" />
            </Svg>
          </StatusIcon>
          <StatusIcon $ml={2}>Accessibility: Investigate</StatusIcon>
        </StatusLeft>
        <StatusStats>
          <span>Average: 6</span>
          <span>Count: 47</span>
          <span>Sum: 66</span>
        </StatusStats>
        <ViewBtn $on>
          <Svg w={13} h={13}><path d="M.5.5h12v12H.5zM4.500.5v12M8.500.5v12M.5 4.500h12M.5 8.500h12" stroke="#666" /></Svg>
        </ViewBtn>
        <ViewBtn>
          <Svg w={13} h={13}><path d="M.5.5h12v12H.5zM3 3.500h7M3 6.500h7M3 9.500h7" stroke="#666" /></Svg>
        </ViewBtn>
        <ViewBtn>
          <Svg w={13} h={13}><path d="M.5.5h12v12H.5zM4.500.5v6h4v-6" stroke="#666" /></Svg>
        </ViewBtn>
        <ZoomSlider>
          <Svg w={118} h={13}>
            <path d="M0 6.500h7M12 6.500h98M56 4v5M110 6.500h8M114 2.500v8" stroke="#555" />
            <rect x="49" y="2" width="5" height="10" fill="#444" />
          </Svg>
        </ZoomSlider>
        <ZoomValue>85%</ZoomValue>
      </StatusBar>

      <Taskbar>
        <StartBtn><WinLogo /></StartBtn>
        <SearchBox>
          <Svg w={16} h={17}>
            <circle cx="10" cy="6" r="5" stroke="#333" strokeWidth="1.200" />
            <path d="M6.500 10 1 16" stroke="#333" strokeWidth="1.300" />
          </Svg>
          Type here to search
        </SearchBox>
        <TaskIcon>
          <Svg w={17} h={16}>
            <path d="M2 .5h12M2 15.500h12M1.500 3.500h12v9h-12z" stroke="#fff" />
            <rect x="15" y="3" width="2" height="3" fill="#fff" />
            <rect x="15" y="8" width="2" height="1" fill="#fff" />
          </Svg>
        </TaskIcon>
        <TaskIcon $ml={3}><EdgeIcon /></TaskIcon>
        <TaskIcon $ml={1}><FolderIcon /></TaskIcon>
        <TaskIcon $ml={1}><FoxIcon /></TaskIcon>
        <TaskIcon $ml={1} $on><XlIcon /></TaskIcon>
        <Tray>
          <TrayIcon>
            <Svg w={13} h={7}><path d="M.5 6.500 6.500.5l6 6" stroke="#fff" strokeWidth="1.100" /></Svg>
          </TrayIcon>
          <TrayIcon>
            <Svg w={12} h={16}>
              <path d="M1 5h7v7H1zM8 7l3-1.500v4L8 11M2 1.500h5M2 14.500h5" stroke="#fff" />
            </Svg>
          </TrayIcon>
          <TrayIcon>
            <Svg w={17} h={16}>
              <path d="M5 .5h11v10H5zM1 4.500h6v5H1zM10 11v4M6 15.500h9" stroke="#fff" />
            </Svg>
          </TrayIcon>
          <TrayIcon>
            <Svg w={17} h={15}>
              <path d="M1 5h3l4-4v13l-4-4H1zM11 5c1 1.500 1 3.500 0 5M13.500 3c2 2.500 2 6.500 0 9" stroke="#fff" />
            </Svg>
          </TrayIcon>
          <Clock>9:04 AM<br />4/29/2025</Clock>
          <NotifyBtn>
            <Svg w={17} h={16}>
              <path d="M.5.5h16v11.500h-5L8.500 15 6 12H.5z" stroke="#fff" />
            </Svg>
          </NotifyBtn>
        </Tray>
      </Taskbar>
      <Watermarked />
    </Root>
  );
}
